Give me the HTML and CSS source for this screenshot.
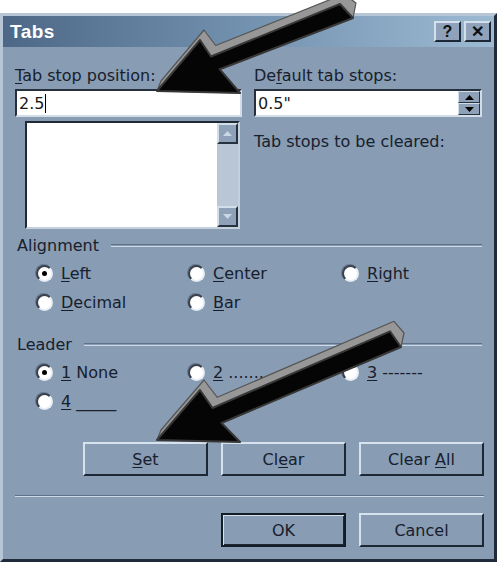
FILE: index.html
```html
<!DOCTYPE html>
<html>
<head>
<meta charset="utf-8">
<link rel="stylesheet" href="styles.css">
</head>
<body>
<div class="dialog">
  <div class="titlebar">
    <span class="title">Tabs</span>
    <div class="tb-btns">
      <span class="tbbtn">?</span>
      <span class="tbbtn">&#x2715;</span>
    </div>
  </div>
  <div class="content">
    <div class="top">
      <div class="col">
        <div class="lbl"><u>T</u>ab stop position:</div>
        <div class="input"><span>2.5</span><span class="caret"></span></div>
        <div class="listbox">
          <div class="list"></div>
          <div class="scroll">
            <div class="sbtn"><svg width="9" height="5" viewBox="0 0 9 5"><path d="M0 5 L4.5 0 L9 5Z" fill="#c9d6e3"/></svg></div>
            <div class="track"></div>
            <div class="sbtn"><svg width="9" height="5" viewBox="0 0 9 5"><path d="M0 0 L4.5 5 L9 0Z" fill="#c9d6e3"/></svg></div>
          </div>
        </div>
      </div>
      <div class="col">
        <div class="lbl">De<u>f</u>ault tab stops:</div>
        <div class="spin">
          <div class="spin-text"><span>0.5"</span></div>
          <div class="spin-btns">
            <div class="spbtn"><svg width="9" height="5" viewBox="0 0 9 5"><path d="M0 5 L4.5 0 L9 5Z" fill="#000"/></svg></div>
            <div class="spbtn"><svg width="9" height="5" viewBox="0 0 9 5"><path d="M0 0 L4.5 5 L9 0Z" fill="#000"/></svg></div>
          </div>
        </div>
        <div class="lbl cleared">Tab stops to be cleared:</div>
      </div>
    </div>

    <div class="group-head"><span>Alignment</span><i class="groove"></i></div>
    <div class="radios">
      <div class="radio"><span class="dot on"></span><span><u>L</u>eft</span></div>
      <div class="radio"><span class="dot"></span><span><u>C</u>enter</span></div>
      <div class="radio"><span class="dot"></span><span><u>R</u>ight</span></div>
      <div class="radio"><span class="dot"></span><span><u>D</u>ecimal</span></div>
      <div class="radio"><span class="dot"></span><span><u>B</u>ar</span></div>
    </div>

    <div class="group-head leader"><span>Leader</span><i class="groove"></i></div>
    <div class="radios">
      <div class="radio"><span class="dot on"></span><span><u>1</u> None</span></div>
      <div class="radio"><span class="dot"></span><span><u>2</u> .......</span></div>
      <div class="radio"><span class="dot"></span><span><u>3</u> -------</span></div>
      <div class="radio"><span class="dot"></span><span><u>4</u> _____</span></div>
    </div>

    <div class="btnrow first">
      <div class="btn"><span><u>S</u>et</span></div>
      <div class="btn"><span>Cl<u>e</u>ar</span></div>
      <div class="btn"><span>Clear <u>A</u>ll</span></div>
    </div>
    <div class="sep"></div>
    <div class="btnrow">
      <div class="btn default"><span>OK</span></div>
      <div class="btn"><span>Cancel</span></div>
    </div>
  </div>
</div>

<svg class="arrows" width="500" height="564" viewBox="0 0 500 564">
  <g>
    <polygon points="157,91 161,81 204,30 215.7,45.5 344,-6 356,3 353,18 219.8,69.3 240,93" fill="#979797" stroke="#555" stroke-width="1.2" stroke-linejoin="round"/>
    <polygon points="157,91 200,40 211,56.5 340,4 353,18 219.8,69.3 240,93" fill="#050505" stroke="#383838" stroke-width="2" stroke-linejoin="round"/>
  </g>
  <g>
    <polygon points="157,440 161,430 204,380 217.3,397.3 394,321.3 404,333 401,347 221.5,423 240,442" fill="#979797" stroke="#555" stroke-width="1.2" stroke-linejoin="round"/>
    <polygon points="157,440 200,390 212.5,408 390,331.3 401,347 221.5,423 240,442" fill="#050505" stroke="#383838" stroke-width="2" stroke-linejoin="round"/>
  </g>
</svg>
</body>
</html>
```

FILE: styles.css
```css
html, body {
  margin: 0;
  padding: 0;
}
body {
  width: 500px;
  height: 564px;
  background: #ffffff;
  overflow: hidden;
  position: relative;
  font-family: "DejaVu Sans", Verdana, sans-serif;
  font-size: 16px;
  color: #17202c;
}
u { text-decoration: underline; text-underline-offset: 2px; }

.dialog {
  margin-top: 13px;
  width: 497px;
  height: 549px;
  box-sizing: border-box;
  border: 3px solid;
  border-color: #b6c6d6 #1f2b3a #1f2b3a #b6c6d6;
  background: #889cb4;
  display: flex;
  flex-direction: column;
}

.titlebar {
  height: 31px;
  flex: none;
  background: linear-gradient(90deg, #4d6886 0%, #6f8eac 45%, #9dbad3 100%);
  display: flex;
  align-items: center;
  justify-content: space-between;
  padding: 0 3px 0 7px;
}
.title {
  color: #ffffff;
  font-family: "Liberation Sans", Arial, sans-serif;
  font-weight: bold;
  font-size: 19px;
  letter-spacing: 0.5px;
}
.tb-btns { display: flex; gap: 3px; }
.tbbtn {
  width: 23px;
  height: 17px;
  background: #8fa2b9;
  border: 2px solid;
  border-color: #d4e0ec #1d2837 #1d2837 #d4e0ec;
  display: flex;
  align-items: center;
  justify-content: center;
  font-family: "Liberation Sans", Arial, sans-serif;
  font-weight: bold;
  font-size: 16px;
  color: #0c0f14;
}

.content {
  padding: 19px 11px 0 12px;
  display: flex;
  flex-direction: column;
}

.top {
  display: grid;
  grid-template-columns: 227px 228px;
  column-gap: 12px;
}
.col { display: flex; flex-direction: column; }
.lbl { line-height: 20px; height: 20px; white-space: nowrap; }
.cleared { margin-top: 15px; }

.input {
  margin-top: 3px;
  height: 28px;
  box-sizing: border-box;
  background: #ffffff;
  border: 2px solid;
  border-color: #26303c #d2dde8 #d2dde8 #26303c;
  padding: 0 0 0 2px;
  display: flex;
  align-items: center;
  color: #1a1a1a;
}
.caret {
  display: inline-block;
  width: 1px;
  height: 19px;
  background: #000;
  margin-left: 1px;
}

.listbox {
  margin: 4px 0 0 10px;
  width: 215px;
  height: 108px;
  box-sizing: border-box;
  border: 2px solid;
  border-color: #202a36 #c4d0dc #c4d0dc #202a36;
  display: flex;
  background: #ffffff;
}
.list { flex: 1; background: #fff; }
.scroll {
  width: 21px;
  background: #b9c6d5;
  display: flex;
  flex-direction: column;
}
.track { flex: 1; }
.sbtn {
  height: 21px;
  box-sizing: border-box;
  background: #8ea1b8;
  border: 2px solid;
  border-color: #d2deea #27323f #27323f #d2deea;
  display: flex;
  align-items: center;
  justify-content: center;
}

.spin {
  margin-top: 3px;
  height: 28px;
  box-sizing: border-box;
  background: #ffffff;
  border: 2px solid;
  border-color: #26303c #d2dde8 #d2dde8 #26303c;
  display: flex;
}
.spin-text {
  flex: 1;
  display: flex;
  align-items: center;
  padding-left: 2px;
  color: #1a1a1a;
}
.spin-btns {
  width: 22px;
  display: flex;
  flex-direction: column;
}
.spbtn {
  flex: 1;
  box-sizing: border-box;
  background: #8ea1b8;
  border: 1px solid;
  border-color: #d2deea #27323f #27323f #d2deea;
  display: flex;
  align-items: center;
  justify-content: center;
}

.group-head {
  margin-top: 7px;
  display: flex;
  align-items: center;
  gap: 12px;
  height: 20px;
  line-height: 20px;
  padding-left: 2px;
}
.group-head.leader { margin-top: 18px; }
.groove {
  flex: 1;
  height: 1px;
  border-top: 1px solid #5f7188;
  border-bottom: 1px solid #cbd8e6;
  margin-top: -2px;
  margin-right: 1px;
}

.radios {
  margin-top: 3px;
  display: grid;
  grid-template-columns: 152px 154px 1fr;
  grid-auto-rows: 29px;
  padding-left: 21px;
}
.radio {
  display: flex;
  align-items: center;
  gap: 8px;
  white-space: nowrap;
}
.dot {
  width: 17px;
  height: 17px;
  box-sizing: border-box;
  border-radius: 50%;
  background: #ffffff;
  border: 2px solid;
  border-color: #3a414c #e8eef5 #e8eef5 #3a414c;
  box-shadow: -1px -1px 0 #6a7a90;
  display: flex;
  align-items: center;
  justify-content: center;
  flex: none;
}
.dot.on::after {
  content: "";
  width: 5px;
  height: 5px;
  border-radius: 50%;
  background: #000;
}

.btnrow {
  display: flex;
  justify-content: flex-end;
  gap: 13px;
  margin-right: -1px;
}
.btnrow.first { margin-top: 26px; }
.btn {
  width: 125px;
  height: 34px;
  box-sizing: border-box;
  border: 2px solid;
  border-color: #d6e2ee #1d2837 #1d2837 #d6e2ee;
  display: flex;
  align-items: center;
  justify-content: center;
  color: #17202c;
  white-space: pre;
}
.btn.default {
  border: 2px solid #141c26;
  box-shadow: inset 1px 1px 0 #d6e2ee, inset -1px -1px 0 #1d2837;
}

.sep {
  margin-top: 19px;
  height: 0;
  border-top: 1px solid #5f7188;
  border-bottom: 1px solid #cbd8e6;
  margin-right: -1px;
}
.sep + .btnrow { margin-top: 16px; }

.arrows {
  position: absolute;
  left: 0;
  top: 0;
  pointer-events: none;
}
```
